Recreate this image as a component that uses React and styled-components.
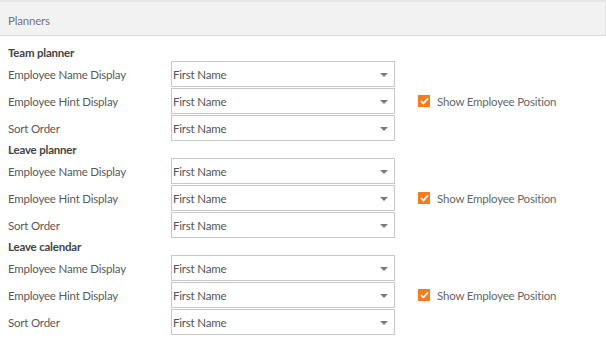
import React from 'react';
import styled, { createGlobalStyle } from 'styled-components';

const GlobalStyle = createGlobalStyle`
  html, body {
    margin: 0;
    padding: 0;
    background: #fff;
  }
  body {
    font-family: Lato, "Open Sans", sans-serif;
    font-size: 11.5px;
    letter-spacing: -0.2px;
    color: #555;
  }
`;

const Panel = styled.div`
  width: 606px;
  height: 343px;
  border-top: 2px solid #e6e6e6;
  box-sizing: border-box;
  overflow: hidden;
`;

const Header = styled.div`
  height: 34px;
  background: #f2f2f2;
  border-bottom: 1px solid #dadada;
  border-right: 1px solid #e2e2e2;
  display: flex;
  align-items: center;
  padding: 3px 0 0 8px;
  box-sizing: border-box;
  color: #777;
`;

const Body = styled.div`
  padding: 9px 0 0 8px;
`;

const Section = styled.div`
  display: flex;
  flex-direction: column;
`;

const Heading = styled.div`
  height: 16px;
  line-height: 16px;
  font-weight: 700;
  color: #444;
`;

const Row = styled.div`
  display: flex;
  align-items: center;
  height: 26px;
  margin-bottom: 1px;
`;

const Label = styled.div`
  width: 163px;
  color: #5a5a5a;
`;

const Select = styled.div`
  width: 224px;
  height: 26px;
  box-sizing: border-box;
  border: 1px solid #c8c8c8;
  display: flex;
  align-items: center;
  justify-content: space-between;
  padding: 0 6px 0 1px;
  color: #555;
`;

const Arrow = styled.span`
  width: 0;
  height: 0;
  border-left: 4px solid transparent;
  border-right: 4px solid transparent;
  border-top: 4px solid #7a7a7a;
  margin-top: 1px;
`;

const Check = styled.label`
  display: flex;
  align-items: center;
  gap: 7px;
  margin-left: 23px;
  color: #666;
`;

const Box = styled.span`
  width: 12px;
  height: 12px;
  background: #f47c20;
  display: flex;
  align-items: center;
  justify-content: center;
`;

const sections = ['Team planner', 'Leave planner', 'Leave calendar'];
const fields = ['Employee Name Display', 'Employee Hint Display', 'Sort Order'];

export default function App() {
  return (
    <>
      <GlobalStyle />
      <Panel>
        <Header>Planners</Header>
        <Body>
          {sections.map(title => (
            <Section key={title}>
              <Heading>{title}</Heading>
              {fields.map(field => (
                <Row key={field}>
                  <Label>{field}</Label>
                  <Select>
                    <span>First Name</span>
                    <Arrow />
                  </Select>
                  {field === 'Employee Hint Display' && (
                    <Check>
                      <Box>
                        <svg width="9" height="8" viewBox="0 0 9 8">
                          <path d="M1 4.2 L3.4 6.4 L8 1.4" stroke="#fff" strokeWidth="1.8" fill="none" />
                        </svg>
                      </Box>
                      Show Employee Position
                    </Check>
                  )}
                </Row>
              ))}
            </Section>
          ))}
        </Body>
      </Panel>
    </>
  );
}
